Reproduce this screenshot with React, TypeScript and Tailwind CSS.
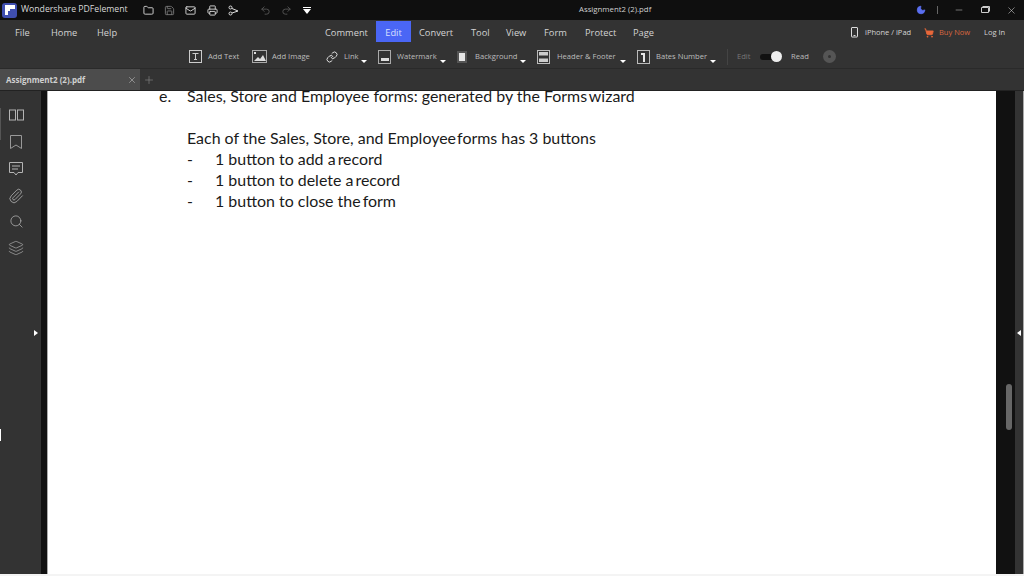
import React from 'react';
import { Folder, Save, Mail, Printer, Undo2, Redo2, Link, X, Plus, ShoppingCart, Minus, Paperclip, Search, Layers, Moon } from 'lucide-react';

const uiFont = "font-['Open_Sans',sans-serif]";

const menuItems = [
  { label: 'Comment', width: 'w-[51px]' },
  { label: 'Edit', width: 'w-[35px]', active: true },
  { label: 'Convert', width: 'w-[52px] ml-[8px]' },
  { label: 'Tool', width: 'w-[35px]' },
  { label: 'View', width: 'w-[38px]' },
  { label: 'Form', width: 'w-[41px]' },
  { label: 'Protect', width: 'w-[48px]' },
  { label: 'Page', width: 'w-[218px]' },
];

const Caret = () => <span className="mt-[10px] h-0 w-0 border-x-[3px] border-t-[3px] border-x-transparent border-t-white" />;

const BoxIcon = ({ children }: { children: React.ReactNode }) => (
  <svg width="14" height="16" viewBox="0 0 14 16" fill="none" className="shrink-0">
    {children}
  </svg>
);

const ToolItem = ({ icon, label, width, iconWidth, caret = true }: { icon: React.ReactNode; label: string; width: string; iconWidth: string; caret?: boolean }) => (
  <div className={`flex shrink-0 items-center pr-[11px] ${width}`}>
    <div className={`flex shrink-0 items-center ${iconWidth}`}>{icon}</div>
    <span className="text-[7.6px] text-[#bdbdbd]">{label}</span>
    {caret && <span className="ml-auto flex"><Caret /></span>}
  </div>
);

const Title = () => (
  <div className="flex h-[20px] items-center bg-[#0f0f0f] text-[#d8d8d8]">
    <div className="ml-[2px] flex h-[15px] w-[15px] items-center justify-center rounded-[3px] bg-[#3f4fb0]">
      <svg width="10" height="10" viewBox="0 0 10 10"><path d="M0 0h10v4H5v2H3v4H0z" fill="#fff" /></svg>
    </div>
    <span className="ml-[4px] w-[122px] whitespace-nowrap text-[8.7px]">Wondershare PDFelement</span>
    <div className="flex items-center">
      <span className="w-[21px]"><Folder size={11} /></span>
      <span className="w-[21px]"><Save size={11} className="text-[#777]" /></span>
      <span className="w-[22px]"><Mail size={11} /></span>
      <span className="w-[21px]"><Printer size={11} /></span>
      <span className="w-[32px]">
        <svg width="11" height="11" viewBox="0 0 11 11" fill="none" stroke="#ddd"><circle cx="2.5" cy="2.5" r="1.5" /><circle cx="2.5" cy="8.5" r="1.5" /><path d="M4 3.5l6 2.5-6 2" /></svg>
      </span>
      <span className="w-[21px]"><Undo2 size={11} className="text-[#555]" /></span>
      <span className="w-[22px]"><Redo2 size={11} className="text-[#555]" /></span>
      <div className="flex w-[276px] flex-col items-start gap-[1px]">
        <span className="h-[1px] w-[8px] bg-white" />
        <span className="h-0 w-0 border-x-[4px] border-t-[5px] border-x-transparent border-t-white" />
      </div>
    </div>
    <span className="w-[337px] whitespace-nowrap text-[7.8px] text-[#cfcfcf]">Assignment2 (2).pdf</span>
    <Moon size={10} fill="#5a6ff0" className="text-[#5a6ff0]" />
    <span className="ml-[11px] h-[8px] w-px bg-[#666]" />
    <Minus size={10} className="ml-[16px] text-[#888]" />
    <svg width="10" height="10" viewBox="0 0 10 10" fill="none" stroke="#ccc" className="ml-[16px]"><path d="M1.5 2.5h7v5h-7zM2.5 1.5h7v5" /></svg>
    <X size={11} strokeWidth={1.25} className="ml-[16px] text-[#ccc]" />
  </div>
);

const Menu = () => (
  <div className="flex h-[23px] items-center whitespace-nowrap pt-[2px] text-[9.3px] text-[#d4d4d4]">
    <span className="ml-[15px] w-[36px]">File</span>
    <span className="w-[46px]">Home</span>
    <span className="w-[228px]">Help</span>
    {menuItems.map((item) => (
      <span
        key={item.label}
        className={`${item.width} ${item.active ? 'mt-[-2px] flex h-[21px] items-center justify-center bg-[#4a66f5] pt-[3px] text-[#d9e0ff]' : ''}`}
      >
        {item.label}
      </span>
    ))}
    <svg width="9" height="11" viewBox="0 0 9 11" fill="none" stroke="#ddd" className="ml-[-1px]"><rect x="1.5" y="0.5" width="6" height="9.5" rx="0.5" /><path d="M3.5 8.5h2" /></svg>
    <span className="ml-[6px] w-[59px] text-[7.5px]">iPhone / iPad</span>
    <ShoppingCart size={10} fill="#e8683a" className="text-[#e8683a]" />
    <span className="ml-[5px] w-[45px] text-[7.5px] text-[#d9673f]">Buy Now</span>
    <span className="text-[7.5px]">Log In</span>
  </div>
);

const Toolbar = () => (
  <div className="flex h-[26px] items-center border-b border-[#2a2a2a] pl-[188px] pt-[2px]">
    <ToolItem
      width="w-[64px]"
      iconWidth="w-[20px]"
      label="Add Text"
      caret={false}
      icon={<svg width="15" height="15" viewBox="0 0 15 15" fill="none" stroke="#ccc"><rect x="1.5" y="1.5" width="12" height="12" /><path d="M4.5 4.5h6M7.5 4.5v6M6 10.5h3" /></svg>}
    />
    <ToolItem
      width="w-[74px]"
      iconWidth="w-[20px]"
      label="Add Image"
      caret={false}
      icon={<svg width="15" height="13" viewBox="0 0 15 13" fill="none"><rect x="0.5" y="0.5" width="14" height="12" stroke="#aaa" /><path d="M2 11l4-4 2 2 3-4 3 6z" fill="#ddd" /><rect x="2" y="2" width="2" height="2" fill="#ddd" /></svg>}
    />
    <ToolItem
      width="w-[52px]"
      iconWidth="w-[18px]"
      label="Link"
      icon={<Link size={12} className="text-[#ddd]" />}
    />
    <ToolItem
      width="w-[79px]"
      iconWidth="w-[19px]"
      label="Watermark"
      icon={<BoxIcon><rect x="0.5" y="1.5" width="12" height="13" stroke="#aaa" /><rect x="3" y="9" width="8" height="3" fill="#ddd" /></BoxIcon>}
    />
    <ToolItem
      width="w-[80px]"
      iconWidth="w-[18px]"
      label="Background"
      icon={<BoxIcon><rect x="0" y="2" width="10" height="12" fill="#555" /><rect x="2" y="4" width="6" height="8" fill="#e6e6e6" /></BoxIcon>}
    />
    <ToolItem
      width="w-[100px]"
      iconWidth="w-[20px]"
      label="Header & Footer"
      icon={<BoxIcon><rect x="0.5" y="1.5" width="12" height="13" stroke="#bbb" /><rect x="2" y="3" width="9" height="3.5" fill="#ccc" /><rect x="2" y="9.5" width="9" height="3.5" fill="#ccc" /></BoxIcon>}
    />
    <ToolItem
      width="w-[90px]"
      iconWidth="w-[19px]"
      label="Bates Number"
      icon={<BoxIcon><rect x="0.5" y="1.5" width="12" height="13" stroke="#bbb" /><path d="M4 4h4v9H6V6H4z" fill="#e6e6e6" /></BoxIcon>}
    />
    <span className="h-[16px] w-px bg-[#444]" />
    <span className="ml-[9px] w-[23px] text-[7.6px] text-[#777]">Edit</span>
    <div className="flex w-[31px] items-center">
      <span className="h-[6px] w-[13px] rounded-l-full bg-[#111]" />
      <span className="ml-[-2px] h-[11px] w-[11px] rounded-full bg-[#eee]" />
    </div>
    <span className="w-[32px] text-[7.6px] text-[#bbb]">Read</span>
    <span className="flex h-[13px] w-[13px] items-center justify-center rounded-full bg-[#555]">
      <span className="h-[3px] w-[3px] rounded-full bg-[#333]" />
    </span>
  </div>
);

const Tabs = () => (
  <div className="flex h-[22px] items-stretch border-b border-[#222] bg-[#333]">
    <div className="flex w-[140px] items-center justify-between bg-[#4c4c4c] pl-[6px] pr-[3px]">
      <span className="text-[8px] font-bold text-[#d0d0d0]">Assignment2 (2).pdf</span>
      <X size={10} strokeWidth={1.25} className="text-[#ccc]" />
    </div>
    <Plus size={12} strokeWidth={1.25} className="ml-[3px] self-center text-[#888]" />
  </div>
);

const Sidebar = () => (
  <div className="relative flex w-[41px] shrink-0 flex-col items-center gap-[11px] bg-[#333] pr-[9px] pt-[16px] text-[#b4b4b4]">
    <svg width="15" height="16" viewBox="0 0 15 16" fill="none" stroke="#b4b4b4"><rect x="0.5" y="3" width="6" height="10" /><rect x="8.5" y="3" width="6" height="10" /></svg>
    <svg width="16" height="16" viewBox="0 0 16 16" fill="none" stroke="#999"><path d="M2.5 1.5h11v13l-5.5-3.5-5.5 3.5z" /></svg>
    <svg width="16" height="16" viewBox="0 0 16 16" fill="none" stroke="#b4b4b4"><path d="M1.5 1.5h13v10h-4.5l-2 2.5-2-2.5h-4.5z" /><path d="M4 5h8M4 8h6" /></svg>
    <Paperclip size={16} strokeWidth={1.2} />
    <Search size={15} strokeWidth={1.2} className="mt-[-1px]" />
    <Layers size={16} strokeWidth={1} />
    <span className="absolute left-[34px] top-[239px] h-0 w-0 border-y-[3px] border-l-[4px] border-y-transparent border-l-white" />
    <span className="absolute left-0 top-[338px] h-[12px] w-[1px] bg-white" />
    <span className="absolute left-0 top-[17px] h-[32px] w-[1px] bg-[#555]" />
  </div>
);

const Doc = () => (
  <div className="min-w-0 flex-1 overflow-hidden border-l border-[#aaa] bg-white pl-[111px] font-['Lato',sans-serif] text-[15.95px] leading-[20.8px] text-[#1a1a1a]">
    <div className="mt-[-5px] flex">
      <span className="w-[28px]">e.</span>
      <span>Sales, Store and Employee forms: generated by the <span className="[word-spacing:-2px]">Forms wizard</span></span>
    </div>
    <div className="ml-[28px] mt-[21px]">Each of the Sales, Store, and <span className="[word-spacing:-3px]">Employee forms</span> has 3 buttons</div>
    <div className="ml-[28px] mt-[0.5px] flex">
      <span className="w-[28px]">-</span>
      <span>1 button to add <span className="[word-spacing:-2px]">a record</span></span>
    </div>
    <div className="ml-[28px] flex">
      <span className="w-[28px]">-</span>
      <span>1 button to delete <span className="[word-spacing:-2px]">a record</span></span>
    </div>
    <div className="ml-[28px] flex">
      <span className="w-[28px]">-</span>
      <span>1 button to close <span className="[word-spacing:-2px]">the form</span></span>
    </div>
  </div>
);

const RightRail = () => (
  <>
    <div className="relative w-[19px] shrink-0 bg-[#111]">
      <span className="absolute left-[10px] top-[293px] h-[46px] w-[6px] rounded-full bg-[#666]" />
    </div>
    <div className="relative w-[9px] shrink-0 border-r border-[#aaa] bg-[#333]">
      <span className="absolute left-[2px] top-[239px] h-0 w-0 border-y-[3px] border-r-[4px] border-y-transparent border-r-white" />
    </div>
  </>
);

export default function App() {
  return (
    <div className={`flex h-[576px] w-[1024px] flex-col overflow-hidden bg-[#333] ${uiFont}`}>
      <Title />
      <Menu />
      <Toolbar />
      <Tabs />
      <div className="flex min-h-0 flex-1">
        <Sidebar />
        <div className="w-[6px] shrink-0 bg-[#111]" />
        <Doc />
        <RightRail />
      </div>
      <div className="h-[2px] bg-[#f4f4f4]" />
    </div>
  );
}
